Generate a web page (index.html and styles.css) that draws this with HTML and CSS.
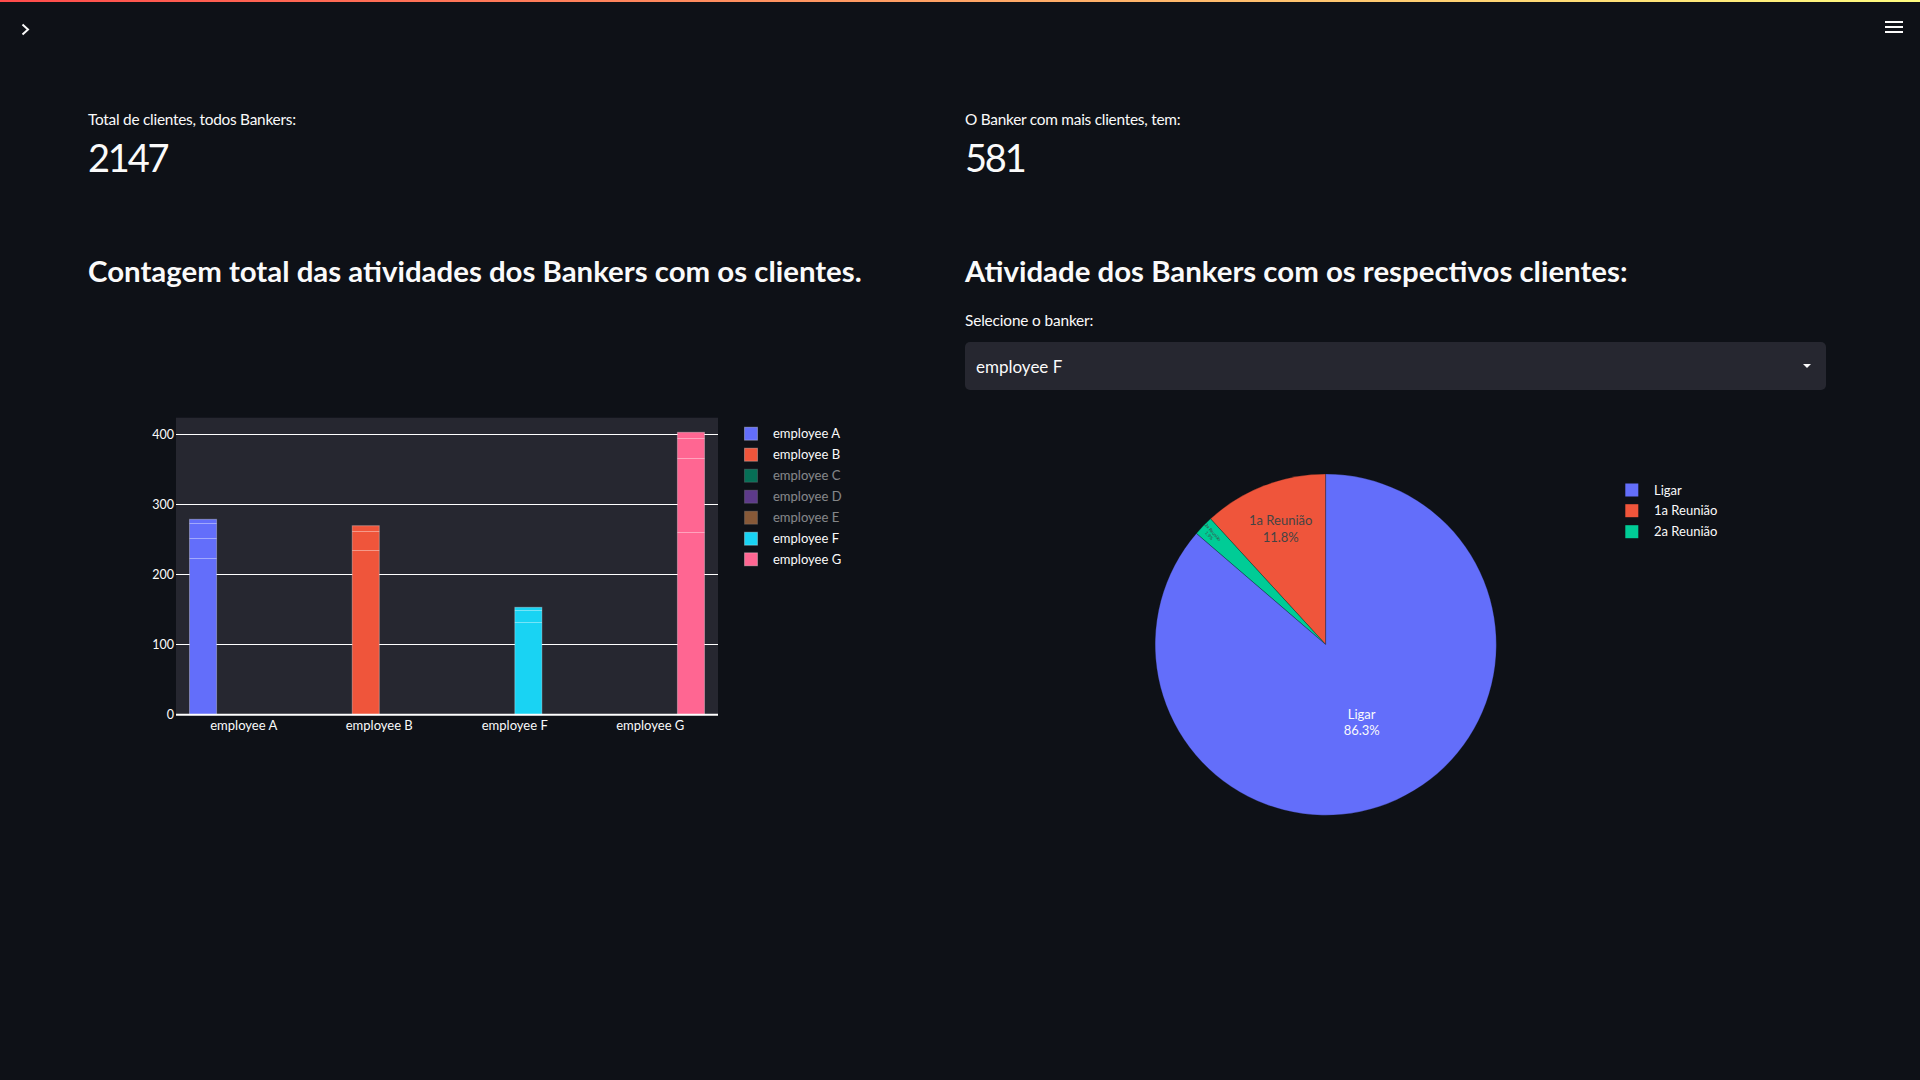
FILE: index.html
```html
<!DOCTYPE html>
<html lang="pt">
<head>
<meta charset="utf-8">
<title>Bankers</title>
<link rel="stylesheet" href="styles.css">
</head>
<body>
<div class="decoration"></div>
<header class="toolbar">
  <svg class="toggle" width="16" height="16" viewBox="0 0 16 16"><path d="M4.5 3.5 L10 8.5 L4.5 13.5" fill="none" stroke="#fafafa" stroke-width="2"/></svg>
  <svg class="menu" width="24" height="24" viewBox="0 0 24 24"><path d="M3 7h18M3 12h18M3 17h18" stroke="#fafafa" stroke-width="2"/></svg>
</header>
<main class="main">
  <div class="grid">
    <div class="metric">
      <div class="metric-label">Total de clientes, todos Bankers:</div>
      <div class="metric-value">2147</div>
    </div>
    <div class="metric">
      <div class="metric-label">O Banker com mais clientes, tem:</div>
      <div class="metric-value">581</div>
    </div>
  </div>
  <div class="grid section">
    <div class="col">
      <h3>Contagem total das atividades dos Bankers com os clientes.</h3>
      <svg class="bar-chart" width="800" height="480" viewBox="0 0 800 480">
        <rect x="88" y="116.7" width="542" height="297" fill="#262730"/>
        <g stroke="#ffffff" stroke-width="1">
          <line x1="88" x2="630" y1="133.5" y2="133.5"/>
          <line x1="88" x2="630" y1="203.5" y2="203.5"/>
          <line x1="88" x2="630" y1="273.5" y2="273.5"/>
          <line x1="88" x2="630" y1="343.5" y2="343.5"/>
        </g>
        <g class="ytick" text-anchor="end">
          <text x="86" y="138">400</text>
          <text x="86" y="208">300</text>
          <text x="86" y="278">200</text>
          <text x="86" y="348">100</text>
          <text x="86" y="418">0</text>
        </g>
        <g stroke="rgba(255,255,255,0.3)" stroke-width="1">
          <rect x="101.5" y="218.3" width="27.1" height="195.4" fill="#636efa"/>
          <rect x="264.2" y="224.7" width="27.1" height="189" fill="#ef553b"/>
          <rect x="426.8" y="306.3" width="27.1" height="107.4" fill="#19d3f3"/>
          <rect x="589.4" y="131.3" width="27.1" height="282.4" fill="#ff6692"/>
        </g>
        <g stroke="rgba(255,255,255,0.4)" stroke-width="1">
          <line x1="101.5" x2="128.6" y1="222.5" y2="222.5"/>
          <line x1="101.5" x2="128.6" y1="237.5" y2="237.5"/>
          <line x1="101.5" x2="128.6" y1="257.5" y2="257.5"/>
          <line x1="264.2" x2="291.3" y1="230.5" y2="230.5"/>
          <line x1="264.2" x2="291.3" y1="249.5" y2="249.5"/>
          <line x1="426.8" x2="453.9" y1="309.5" y2="309.5"/>
          <line x1="426.8" x2="453.9" y1="321.5" y2="321.5"/>
          <line x1="589.4" x2="616.5" y1="137.5" y2="137.5"/>
          <line x1="589.4" x2="616.5" y1="157.5" y2="157.5"/>
          <line x1="589.4" x2="616.5" y1="231.5" y2="231.5"/>
        </g>
        <line x1="88" x2="630" y1="413.7" y2="413.7" stroke="#ffffff" stroke-width="2"/>
        <g class="xtick" text-anchor="middle">
          <text x="155.75" y="428.5">employee A</text>
          <text x="291.25" y="428.5">employee B</text>
          <text x="426.75" y="428.5">employee F</text>
          <text x="562.25" y="428.5">employee G</text>
        </g>
        <g class="legend">
          <g><rect x="656.5" y="126.2" width="13" height="13" fill="#636efa" stroke="rgba(255,255,255,0.3)"/><text x="685" y="137">employee A</text></g>
          <g><rect x="656.5" y="147.2" width="13" height="13" fill="#ef553b" stroke="rgba(255,255,255,0.3)"/><text x="685" y="158">employee B</text></g>
          <g opacity="0.5"><rect x="656.5" y="168.2" width="13" height="13" fill="#00cc96" stroke="rgba(255,255,255,0.3)"/><text x="685" y="179">employee C</text></g>
          <g opacity="0.5"><rect x="656.5" y="189.2" width="13" height="13" fill="#ab63fa" stroke="rgba(255,255,255,0.3)"/><text x="685" y="200">employee D</text></g>
          <g opacity="0.5"><rect x="656.5" y="210.2" width="13" height="13" fill="#ffa15a" stroke="rgba(255,255,255,0.3)"/><text x="685" y="221">employee E</text></g>
          <g><rect x="656.5" y="231.2" width="13" height="13" fill="#19d3f3" stroke="rgba(255,255,255,0.3)"/><text x="685" y="242">employee F</text></g>
          <g><rect x="656.5" y="251.8" width="13" height="13" fill="#ff6692" stroke="rgba(255,255,255,0.3)"/><text x="685" y="262.6">employee G</text></g>
        </g>
      </svg>
    </div>
    <div class="col">
      <h3>Atividade dos Bankers com os respectivos clientes:</h3>
      <div class="select-label">Selecione o banker:</div>
      <div class="select">
        <span>employee F</span>
        <svg width="10" height="6" viewBox="0 0 10 6"><path d="M1 1h8L5 5z" fill="#fafafa"/></svg>
      </div>
      <svg class="pie-chart" width="860" height="460" viewBox="0 0 860 460">
        <g stroke="rgba(14,17,23,0.35)" stroke-width="0.8">
          <path d="M360.7 244.6 L360.7 74 A170.6 170.6 0 0 0 245.5 118.8 Z" fill="#ef553b"/>
          <path d="M360.7 244.6 L245.5 118.8 A170.6 170.6 0 0 0 231.35 133.4 Z" fill="#00cc96"/>
          <path d="M360.7 244.6 L231.35 133.4 A170.6 170.6 0 1 0 360.7 74 Z" fill="#636efa"/>
        </g>
        <g class="pie-label dark" text-anchor="middle">
          <text x="315.7" y="124.5">1a Reunião</text>
          <text x="315.7" y="141.8">11.8%</text>
        </g>
        <g class="pie-tiny" text-anchor="middle" transform="translate(246 134) rotate(48)">
          <text x="0" y="-1">2a Reunião</text>
          <text x="0" y="4">1.9%</text>
        </g>
        <g class="pie-label" text-anchor="middle">
          <text x="396.7" y="318.5">Ligar</text>
          <text x="396.7" y="335">86.3%</text>
        </g>
        <g class="legend">
          <g><rect x="660.3" y="83.5" width="13" height="13" fill="#636efa"/><text x="689" y="94.5">Ligar</text></g>
          <g><rect x="660.3" y="104.2" width="13" height="13" fill="#ef553b"/><text x="689" y="115.2">1a Reunião</text></g>
          <g><rect x="660.3" y="125.2" width="13" height="13" fill="#00cc96"/><text x="689" y="136.2">2a Reunião</text></g>
        </g>
      </svg>
    </div>
  </div>
</main>
</body>
</html>
```
FILE: styles.css
```css
html, body {
  margin: 0;
  padding: 0;
  background: #0e1117;
  color: #fafafa;
  font-family: Lato, "Noto Sans", sans-serif;
}

.decoration {
  height: 2px;
  background: linear-gradient(90deg, #ff4b4b, #fffd80);
}

.toolbar {
  display: flex;
  justify-content: space-between;
  align-items: flex-start;
  height: 48px;
  padding: 0 14px 0 18px;
}

.toolbar .toggle {
  margin-top: 19px;
  display: block;
}

.toolbar .menu {
  margin-top: 13px;
  display: block;
}

.main {
  padding: 58px 94px 0 88px;
}

.grid {
  display: grid;
  grid-template-columns: 1fr 1fr;
  column-gap: 16px;
}

.metric-label {
  font-size: 15.4px;
  line-height: 22px;
  height: 22px;
  letter-spacing: -0.25px;
}

.metric-value {
  margin-top: 2px;
  font-size: 38px;
  line-height: 50px;
  letter-spacing: -2.2px;
}

.section {
  margin-top: 66px;
}

h3 {
  margin: 3px 0 0;
  font-size: 29.4px;
  line-height: 40px;
  font-weight: 700;
  white-space: nowrap;
}

.bar-chart {
  display: block;
  margin-top: 10px;
}

.select-label {
  margin-top: 18px;
  font-size: 15.4px;
  line-height: 22px;
  letter-spacing: -0.15px;
}

.select {
  margin-top: 11px;
  height: 48px;
  box-sizing: border-box;
  background: #262730;
  border-radius: 5px;
  display: flex;
  align-items: center;
  justify-content: space-between;
  padding: 0 14px 0 11px;
  font-size: 17px;
}

.select svg {
  display: block;
}

.pie-chart {
  display: block;
  margin-top: 10px;
}

svg text {
  font-family: Lato, "Noto Sans", sans-serif;
  fill: #fafafa;
}

.ytick text {
  font-size: 12.5px;
}

.xtick text {
  font-size: 13px;
}

.legend text {
  font-size: 13px;
}

.pie-label text {
  font-size: 13px;
}

.pie-label.dark text {
  fill: #444444;
}

.pie-tiny text {
  font-size: 4.5px;
  fill: #444444;
}
```
